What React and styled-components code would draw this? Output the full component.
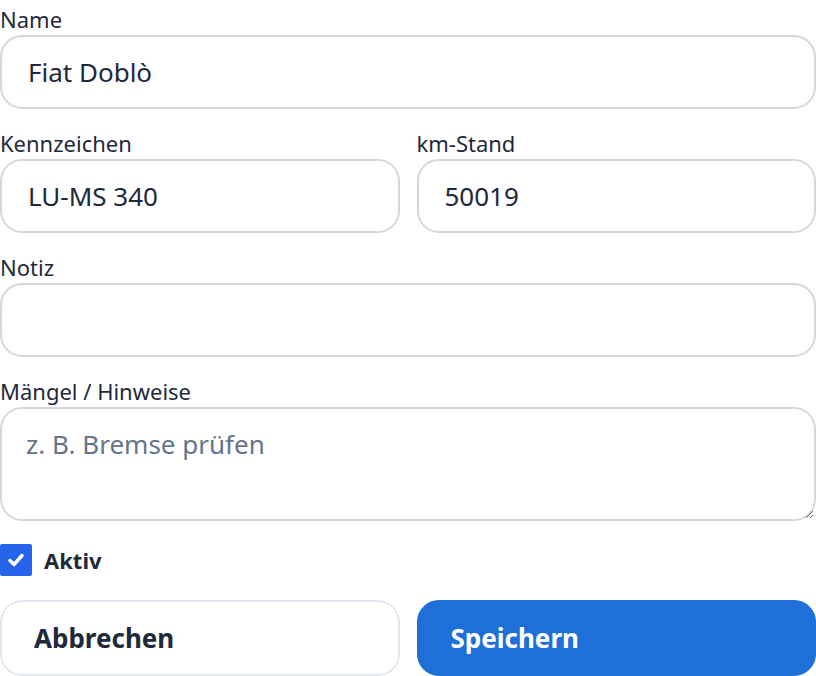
import React, { useState } from 'react';
import styled, { createGlobalStyle } from 'styled-components';

const GlobalStyle = createGlobalStyle`
	html, body {
		margin: 0;
		padding: 0;
		background: #ffffff;
	}
	* {
		box-sizing: border-box;
	}
`

const Form = styled.form`
	width: 816px;
	display: flex;
	flex-direction: column;
	gap: 15px;
	font-family: 'Noto Sans', 'Open Sans', sans-serif;
	color: #1e293b;
`

const Row = styled.div`
	display: grid;
	grid-template-columns: 1fr 1fr;
	gap: 17px;
`

const Field = styled.label`
	display: flex;
	flex-direction: column;
`

const LabelText = styled.span`
	display: block;
	height: 35px;
	font-size: 22px;
	line-height: 30px;
	padding-top: 4px;
	color: #1e293b;
`

const Input = styled.input`
	width: 100%;
	height: 74px;
	padding: 0 26px;
	border: 2px solid #d4d7dd;
	border-radius: 22px;
	font-family: inherit;
	font-size: 26px;
	color: #1e293b;
	background: #fff;
	outline: none;
`

const TextArea = styled.textarea`
	width: 100%;
	height: 114px;
	padding: 18px 24px;
	border: 2px solid #d4d7dd;
	border-radius: 22px;
	font-family: inherit;
	font-size: 26px;
	line-height: 34px;
	color: #1e293b;
	background: #fff;
	outline: none;
	resize: vertical;
	display: block;

	&::placeholder {
		color: #64748b;
	}
`

const CheckRow = styled.label`
	display: flex;
	align-items: center;
	gap: 12px;
	height: 48px;
	font-size: 22px;
	font-weight: 700;
	color: #1e293b;
`

const CheckBox = styled.span`
	width: 32px;
	height: 32px;
	background: #2563eb;
	border-radius: 2px;
	display: flex;
	align-items: center;
	justify-content: center;
`

const Buttons = styled.div`
	display: grid;
	grid-template-columns: 1fr 1fr;
	gap: 17px;
	margin-top: 1px;
`

const Button = styled.button`
	height: 76px;
	border-radius: 22px;
	padding: 0 32px;
	text-align: left;
	font-family: inherit;
	font-size: 26px;
	font-weight: 700;
	cursor: pointer;
	border: 2px solid ${props => props.primary ? '#1f6fd8' : '#e2e8f0'};
	background: ${props => props.primary ? '#1f6fd8' : '#ffffff'};
	color: ${props => props.primary ? '#ffffff' : '#1e293b'};
`

const App = () => {
	const [active, setActive] = useState(true);
	return (
		<>
			<GlobalStyle />
			<Form onSubmit={e => e.preventDefault()}>
				<Field>
					<LabelText>Name</LabelText>
					<Input defaultValue="Fiat Doblò" />
				</Field>
				<Row>
					<Field>
						<LabelText>Kennzeichen</LabelText>
						<Input defaultValue="LU-MS 340" />
					</Field>
					<Field>
						<LabelText>km-Stand</LabelText>
						<Input defaultValue="50019" />
					</Field>
				</Row>
				<Field>
					<LabelText>Notiz</LabelText>
					<Input defaultValue="" />
				</Field>
				<Field>
					<LabelText>Mängel / Hinweise</LabelText>
					<TextArea placeholder="z. B. Bremse prüfen" />
				</Field>
				<CheckRow onClick={() => setActive(!active)}>
					<CheckBox>
						{active && (
							<svg width="20" height="20" viewBox="0 0 20 20">
								<path d="M4 10.5l4 4 8-9" fill="none" stroke="#fff" strokeWidth="3.5" strokeLinecap="round" strokeLinejoin="round" />
							</svg>
						)}
					</CheckBox>
					Aktiv
				</CheckRow>
				<Buttons>
					<Button type="button">Abbrechen</Button>
					<Button type="submit" primary>Speichern</Button>
				</Buttons>
			</Form>
		</>
	)
}

export default App;
